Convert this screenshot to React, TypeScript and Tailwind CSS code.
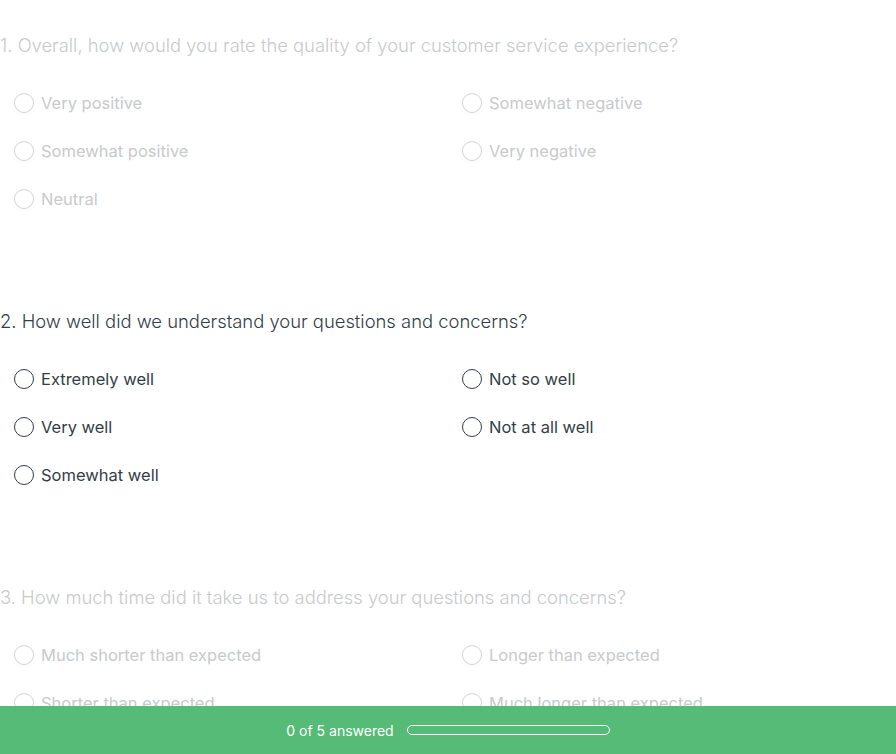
import React from "react";

type Q = { n: number; title: string; left: string[]; right: string[]; active: boolean };

const questions: Q[] = [
  {
    n: 1,
    title: "Overall, how would you rate the quality of your customer service experience?",
    left: ["Very positive", "Somewhat positive", "Neutral"],
    right: ["Somewhat negative", "Very negative"],
    active: false,
  },
  {
    n: 2,
    title: "How well did we understand your questions and concerns?",
    left: ["Extremely well", "Very well", "Somewhat well"],
    right: ["Not so well", "Not at all well"],
    active: true,
  },
  {
    n: 3,
    title: "How much time did it take us to address your questions and concerns?",
    left: ["Much shorter than expected", "Shorter than expected"],
    right: ["Longer than expected", "Much longer than expected"],
    active: false,
  },
];

function Option({ label, active }: { label: string; active: boolean }) {
  return (
    <label className="flex h-12 items-center pl-[14px]">
      <span
        className={
          active
            ? "h-5 w-5 shrink-0 rounded-full border-[1.5px] border-[#333e48]"
            : "h-5 w-5 shrink-0 rounded-full border-[1.5px] border-[#d0d2d3]"
        }
      />
      <span
        className={
          active
            ? "ml-[7px] text-[16.5px] leading-6 text-[#333e48]"
            : "ml-[7px] text-[16.5px] leading-6 text-[#c8cacb]"
        }
      >
        {label}
      </span>
    </label>
  );
}

export default function App() {
  return (
    <div
      className="relative h-[754px] w-[896px] overflow-hidden bg-white"
      style={{ fontFamily: "Inter, 'Noto Sans', sans-serif" }}
    >
      <div className="flex flex-col pt-[33px]">
        {questions.map((q) => (
          <section key={q.n} className="mb-[86px]">
            <h2
              className={
                q.active
                  ? "text-[18.4px] font-light leading-6 text-[#333e48]"
                  : "text-[18.4px] font-light leading-6 text-[#c8cacb]"
              }
            >
              {q.n}. {q.title}
            </h2>
            <div className="mt-[22px] grid grid-cols-2">
              <div className="flex flex-col">
                {q.left.map((o) => (
                  <Option key={o} label={o} active={q.active} />
                ))}
              </div>
              <div className="flex flex-col">
                {q.right.map((o) => (
                  <Option key={o} label={o} active={q.active} />
                ))}
              </div>
            </div>
          </section>
        ))}
      </div>
      <div className="fixed bottom-0 left-0 flex h-12 w-[896px] items-center justify-center bg-[#56bb76]">
        <span className="text-[14px] text-white">0 of 5 answered</span>
        <div className="ml-[13px] h-[10px] w-[203px] rounded-full border-[1.5px] border-white" />
      </div>
    </div>
  );
}
